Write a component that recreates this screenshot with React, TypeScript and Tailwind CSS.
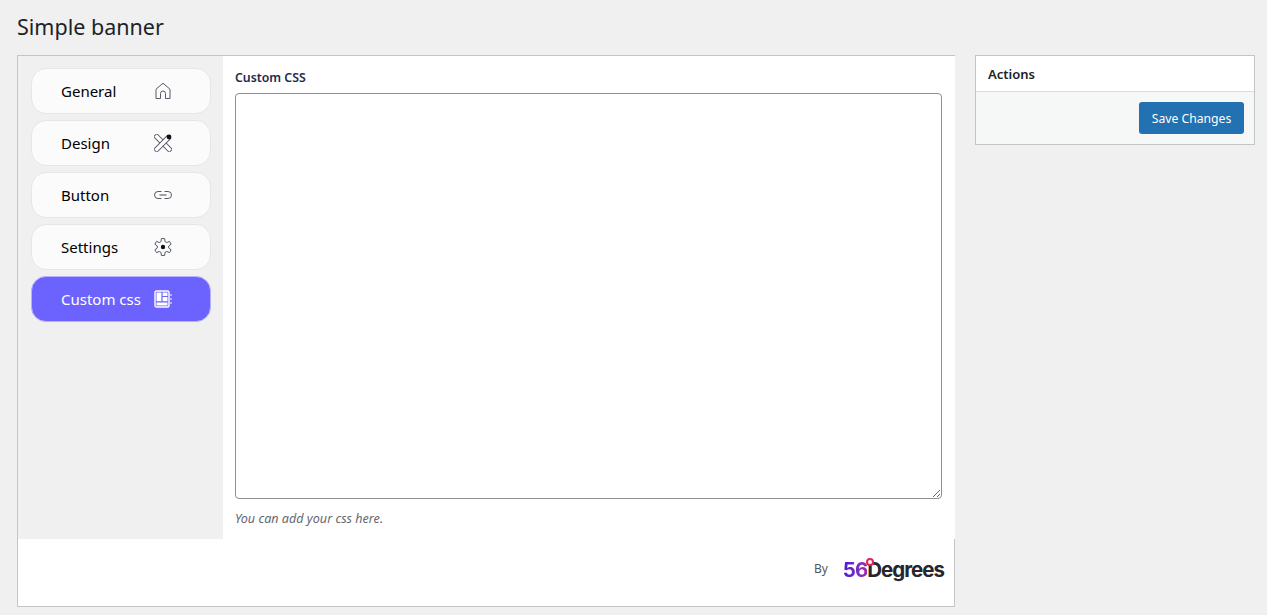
import type { ReactNode } from "react";

// 6-tooth cog outline, built once at load
const gearPoints = Array.from({ length: 6 }, (_, i) => {
  const a = -90 + i * 60;
  return [
    [5.8, a - 20],
    [8.6, a - 11],
    [8.6, a + 11],
    [5.8, a + 20],
  ]
    .map(([r, d]) => {
      const rad = (d * Math.PI) / 180;
      return `${(9 + r * Math.cos(rad)).toFixed(2)},${(9 + r * Math.sin(rad)).toFixed(2)}`;
    })
    .join(" ");
}).join(" ");

// ─── Sidebar icons ──────────────────────────────────────────────────────────
function HomeIcon() {
  return (
    <svg width="18" height="18" viewBox="0 0 18 18" fill="none" stroke="#555b68" strokeWidth="1">
      <path d="M2 16.5V7.2L9 1.2l7 6v9.3h-4.5v-5a2.5 2.5 0 0 0-5 0v5z" strokeLinejoin="round" />
    </svg>
  );
}

function DesignIcon() {
  return (
    <svg width="18" height="18" viewBox="0 0 18 18" fill="none" stroke="#555b68" strokeWidth="1">
      <rect x="-2" y="6.8" width="22" height="4.4" rx="0.5" fill="#fff" transform="rotate(45 9 9)" />
      <rect x="-2" y="6.8" width="20" height="4.4" rx="0.5" fill="#fff" transform="rotate(-45 9 9)" />
      <circle cx="15" cy="3" r="2.4" fill="#111" stroke="none" />
    </svg>
  );
}

function LinkIcon() {
  return (
    <svg width="18" height="18" viewBox="0 0 18 18" fill="none" stroke="#555b68" strokeWidth="1">
      <path d="M7.5 5.5H4a3.5 3.5 0 0 0 0 7h3.5M10.5 5.5H14a3.5 3.5 0 0 1 0 7h-3.5" />
      <path d="M5.5 9h7" stroke="#8a8d94" strokeWidth="1.6" />
    </svg>
  );
}

function GearIcon() {
  return (
    <svg width="18" height="18" viewBox="0 0 18 18" fill="none" stroke="#555b68" strokeWidth="1">
      <polygon points={gearPoints} strokeLinejoin="round" />
      <circle cx="9" cy="9" r="2.2" fill="#111" stroke="none" />
    </svg>
  );
}

function LayoutIcon() {
  return (
    <svg width="18" height="18" viewBox="0 0 18 18" fill="none">
      <rect x="1" y="1" width="14" height="16" rx="1.5" stroke="#fff" strokeWidth="1.4" />
      <path d="M2.5 2.5H7.4v8.7H2.5zM8.6 2.5h4.9v3.4H8.6zM8.6 7.1h4.9v4.1H8.6zM2.5 12.4h11v3.1h-11z" fill="#fff" />
      <path d="M16 5h2M16 9h2M16 13h2" stroke="#fff" strokeWidth="1" />
    </svg>
  );
}

function NavItem({ label, icon, active }: { label: string; icon: ReactNode; active?: boolean }) {
  return (
    <div
      className={
        active
          ? "flex h-[46px] w-[180px] items-center rounded-[15px] border border-[#b5b0ff] bg-[#6c63ff] pl-[29px] text-white"
          : "flex h-[46px] w-[180px] items-center rounded-[15px] border border-[#e6e6e6] bg-[#fbfbfb] pl-[29px] text-black"
      }
    >
      <span className="w-[93px] text-[15px] leading-none whitespace-nowrap">{label}</span>
      <span className="flex">{icon}</span>
    </div>
  );
}

export default function App() {
  return (
    <div className="min-h-[615px] overflow-hidden bg-[#f0f0f1] pr-3 pl-[17px] font-['Noto_Sans',sans-serif] text-[#3c434a]">
      <h1 className="h-[55px] pt-[11px] text-[21.5px] leading-[32px] font-normal text-[#1d2327]">Simple banner</h1>

      <div className="flex items-start gap-5">
        {/* Main panel */}
        <div className="h-[552px] w-[938px] border border-[#c3c4c7] bg-white">
          <div className="-mr-px flex h-[483px] bg-white">
            <div className="flex w-[205px] flex-col gap-[6px] bg-[#f0f0f1] pt-3 pl-[13px]">
              <NavItem label="General" icon={<HomeIcon />} />
              <NavItem label="Design" icon={<DesignIcon />} />
              <NavItem label="Button" icon={<LinkIcon />} />
              <NavItem label="Settings" icon={<GearIcon />} />
              <NavItem label="Custom css" icon={<LayoutIcon />} active />
            </div>
            <div className="flex-1 pt-[14px] pl-3">
              <label className="block h-[23px] text-[12.3px] leading-[16px] font-semibold text-[#1e2a4a]">Custom CSS</label>
              <textarea className="block h-[406px] w-[707px] rounded-[4px] border border-[#8c8f94] bg-white" />
              <p className="mt-[12px] text-[12.6px] leading-[16px] text-[#646970] italic">You can add your css here.</p>
            </div>
          </div>

          {/* Footer credit */}
          <div className="flex h-[67px] items-center justify-end pr-[10px] pb-1">
            <span className="mr-[15px] mb-1 text-[12px] text-[#50575e]">By</span>
            <span className="relative font-['Inter',sans-serif] text-[20.5px] leading-none font-bold tracking-[-1px]">
              <span className="bg-gradient-to-r from-[#4a10e0] to-[#9a28b0] bg-clip-text text-transparent">56</span>
              <span className="text-[#26272e]">Degrees</span>
              <span className="absolute top-[-2px] left-[23px] size-[8px] rounded-full border-2 border-[#e8205f] bg-white" />
            </span>
          </div>
        </div>

        {/* Actions box */}
        <div className="h-[90px] w-[280px] border border-[#c3c4c7] bg-white">
          <div className="flex h-[36px] items-center border-b border-[#dcdcde] pt-[2px] pl-3 text-[13px] font-semibold text-[#1d2327]">
            Actions
          </div>
          <div className="flex h-[52px] items-start justify-end bg-[#f6f7f7] pt-[10px] pr-[10px]">
            <button className="h-[32px] w-[105px] rounded-[3px] bg-[#2271b1] pt-[2px] text-[12.2px] text-white">Save Changes</button>
          </div>
        </div>
      </div>
    </div>
  );
}
